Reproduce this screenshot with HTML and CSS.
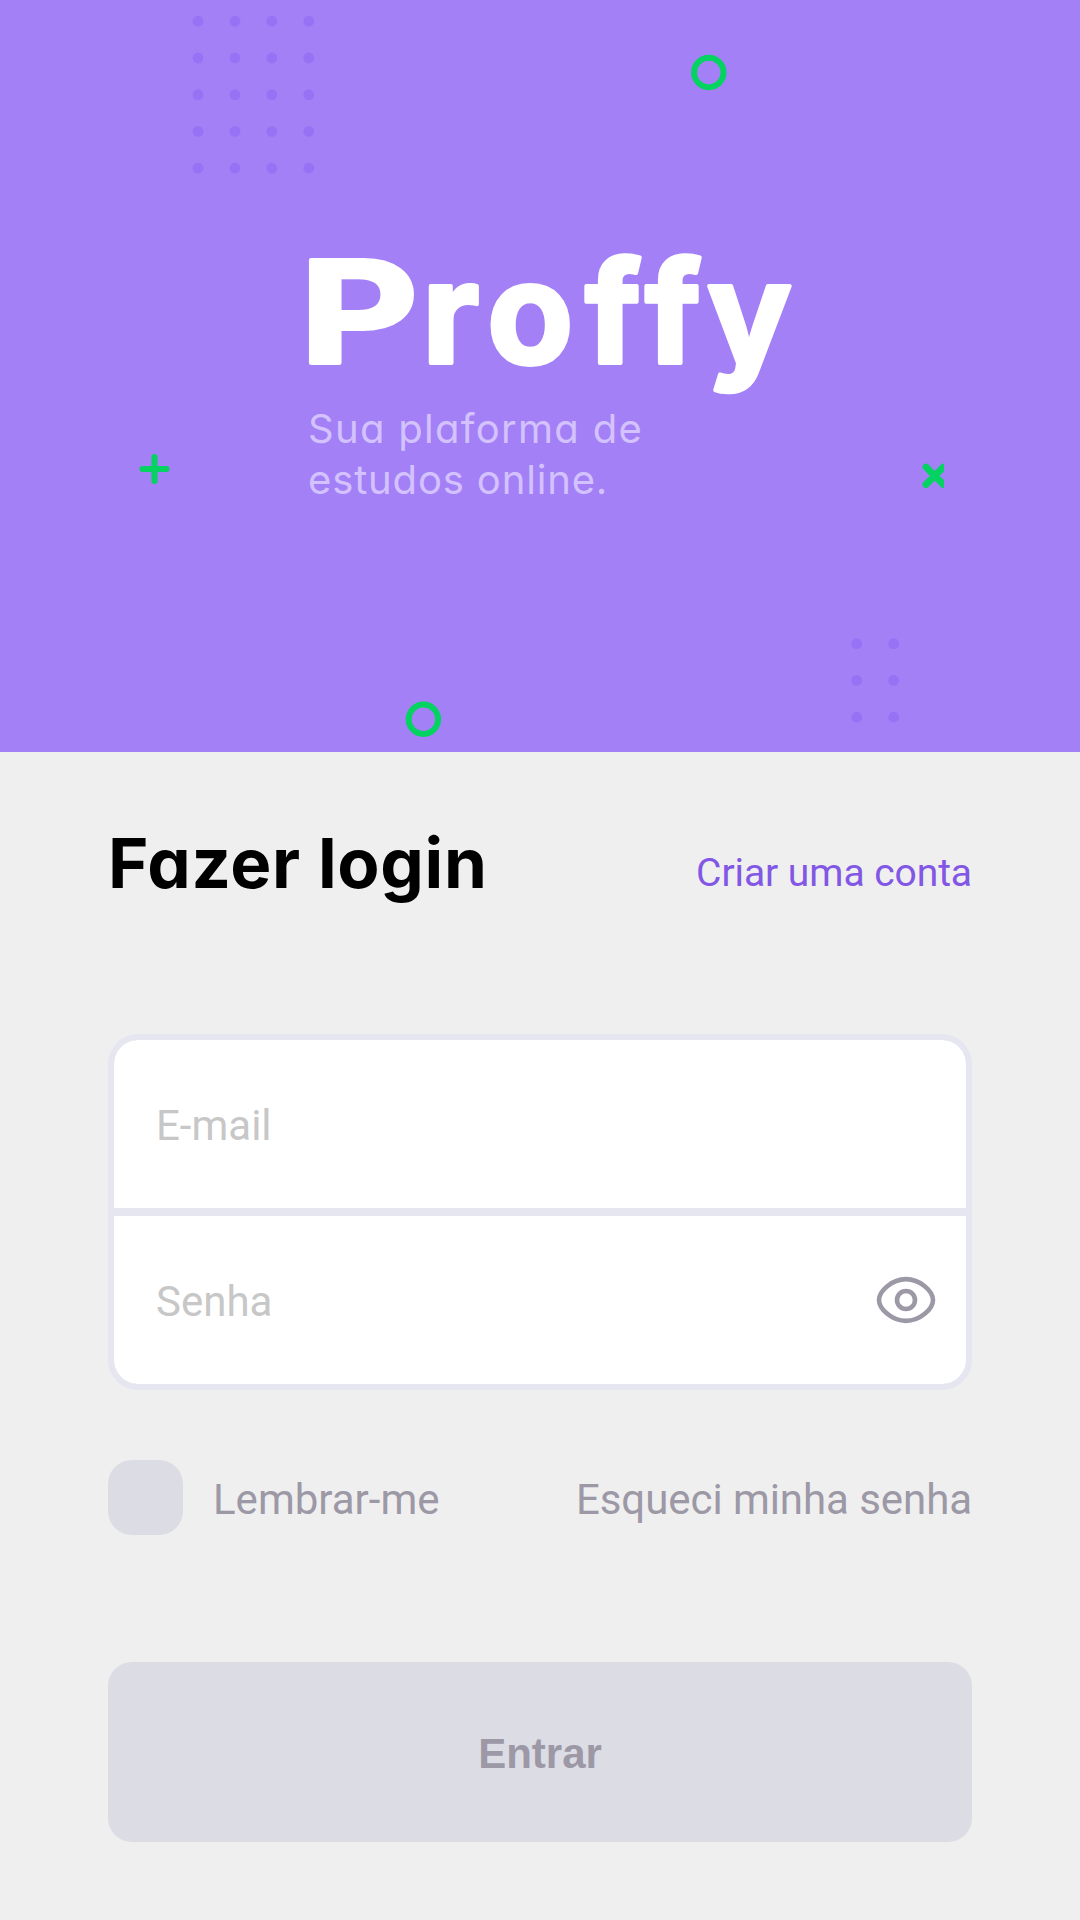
FILE: index.html
```html
<!DOCTYPE html>
<html lang="pt-BR">
<head>
<meta charset="utf-8">
<meta name="viewport" content="width=device-width, initial-scale=1">
<title>Proffy</title>
<link rel="stylesheet" href="styles.css">
</head>
<body>
<header class="hero">
  <svg class="hero-pattern" viewBox="0 0 1080 752" aria-hidden="true">
    <defs>
      <g id="dot-row"><circle cx="198" r="5.4"/><circle cx="235" r="5.4"/><circle cx="271.8" r="5.4"/><circle cx="308.8" r="5.4"/></g>
      <g id="dot-pair"><circle cx="856.7" r="5.4"/><circle cx="893.7" r="5.4"/></g>
      <clipPath id="cross-clip"><rect x="915" y="455" width="29" height="40"/></clipPath>
    </defs>
    <g fill="#9871f5">
      <use href="#dot-row" y="21.2"/><use href="#dot-row" y="58"/><use href="#dot-row" y="94.7"/><use href="#dot-row" y="131.4"/><use href="#dot-row" y="168.2"/>
      <use href="#dot-pair" y="643.6"/><use href="#dot-pair" y="680.4"/><use href="#dot-pair" y="717.2"/>
    </g>
    <g fill="none" stroke="#04d361" stroke-width="6" stroke-linecap="round">
      <circle cx="708.8" cy="72.5" r="14.7"/>
      <circle cx="423.4" cy="719.3" r="14.7"/>
      <path d="M142.500 469h24M154.500 457v24"/>
      <path stroke-width="6.800" d="M926 467l17.500 17.500M926 484.500l17.500-17.500" clip-path="url(#cross-clip)"/>
    </g>
  </svg>
  <div class="brand">
    <h1 class="wordmark"><svg class="wordmark-art" viewBox="0 0 482 150"><text class="wordmark-text" transform="scale(1.300 1)" x="-6.500" y="113">P</text><text class="wordmark-text" x="114 179 277 337 399" y="113">roffy</text></svg></h1>
    <p class="tagline"><span class="line-one">Sua plaforma de</span><br><span class="line-two">estudos online.</span></p>
  </div>
</header>
<main class="login">
  <div class="login-head">
    <h2 class="title">Fazer login</h2>
    <a class="signup">Criar uma conta</a>
  </div>
  <form class="form">
    <div class="fields">
      <label class="field"><span class="placeholder">E-mail</span></label>
      <label class="field"><span class="placeholder">Senha</span>
        <svg class="eye" viewBox="0 0 60 48" aria-hidden="true"><path d="M3 24C3 15 16 3.100 30 3.100S57 15 57 24S44 44.900 30 44.900S3 33 3 24Z"/><circle cx="30" cy="24" r="9"/></svg>
      </label>
    </div>
    <div class="options">
      <label class="remember"><span class="checkbox"></span><span class="option-text">Lembrar-me</span></label>
      <a class="forgot option-text">Esqueci minha senha</a>
    </div>
    <button class="submit" type="button">Entrar</button>
  </form>
</main>
</body>
</html>
```
FILE: styles.css
```css
* { box-sizing: border-box; }

body {
  margin: 0;
  min-height: 1920px;
  background: #efefef;
  font-family: Roboto, sans-serif;
}

h1, h2, p { margin: 0; }

.hero {
  position: relative;
  height: 752px;
  padding: 250px 0 0 308px;
  background: #a380f6;
}

.hero-pattern {
  position: absolute;
  inset: 0;
  width: 1080px;
  height: 752px;
}

.wordmark { height: 153px; line-height: 0; }

.wordmark-art {
  width: 482px;
  height: 150px;
  overflow: visible;
}

.wordmark-text {
  font: 700 141px Inter, sans-serif;
  fill: #fff;
  stroke: #fff;
  stroke-width: 4px;
  stroke-linejoin: round;
}

.tagline {
  color: #d4c2ff;
  font: 400 40px/51px Inter, sans-serif;
  font-feature-settings: "cv11";
  white-space: nowrap;
}

.line-one { letter-spacing: 1.3px; }
.line-two { letter-spacing: 0.85px; }

.login { padding: 67px 108px 79px; }

.login-head {
  display: flex;
  justify-content: space-between;
  align-items: baseline;
  height: 215px;
}

.title {
  color: #000;
  font: 700 69px/88px Inter, sans-serif;
  font-feature-settings: "cv11";
  letter-spacing: 0.7px;
}

.signup {
  color: #8257e5;
  font-size: 39px;
  letter-spacing: -0.07px;
  transform: translateY(-2px);
}

.fields {
  display: grid;
  grid-template-rows: 168px 168px;
  gap: 8px;
  border: 6px solid #e6e6f0;
  border-radius: 30px;
  background: #e6e6f0;
  overflow: hidden;
}

.field {
  display: flex;
  align-items: center;
  justify-content: space-between;
  padding: 0 30px 0 42px;
  background: #fff;
}

.field:first-child { border-radius: 24px 24px 0 0; }
.field:last-child { border-radius: 0 0 24px 24px; }

.placeholder {
  padding-top: 2px;
  color: #c7c7c7;
  font-size: 42px;
}

.eye {
  width: 60px;
  height: 48px;
  fill: none;
  stroke: #9c98a6;
  stroke-width: 4.6;
}

.options {
  display: flex;
  align-items: center;
  justify-content: space-between;
  margin: 70px 0 127px;
  color: #9c98a6;
  font-size: 42px;
}

.option-text { padding-top: 4px; }

.forgot { letter-spacing: -0.06px; }

.remember {
  display: flex;
  align-items: center;
  gap: 30px;
}

.checkbox {
  width: 75px;
  height: 75px;
  border-radius: 24px;
  background: #dcdce5;
}

.submit {
  display: block;
  width: 100%;
  height: 180px;
  padding: 4px 0 0;
  border: 0;
  border-radius: 24px;
  background: #dcdce5;
  color: #9c98a6;
  font: 700 42px "Liberation Sans", sans-serif;
}
```
